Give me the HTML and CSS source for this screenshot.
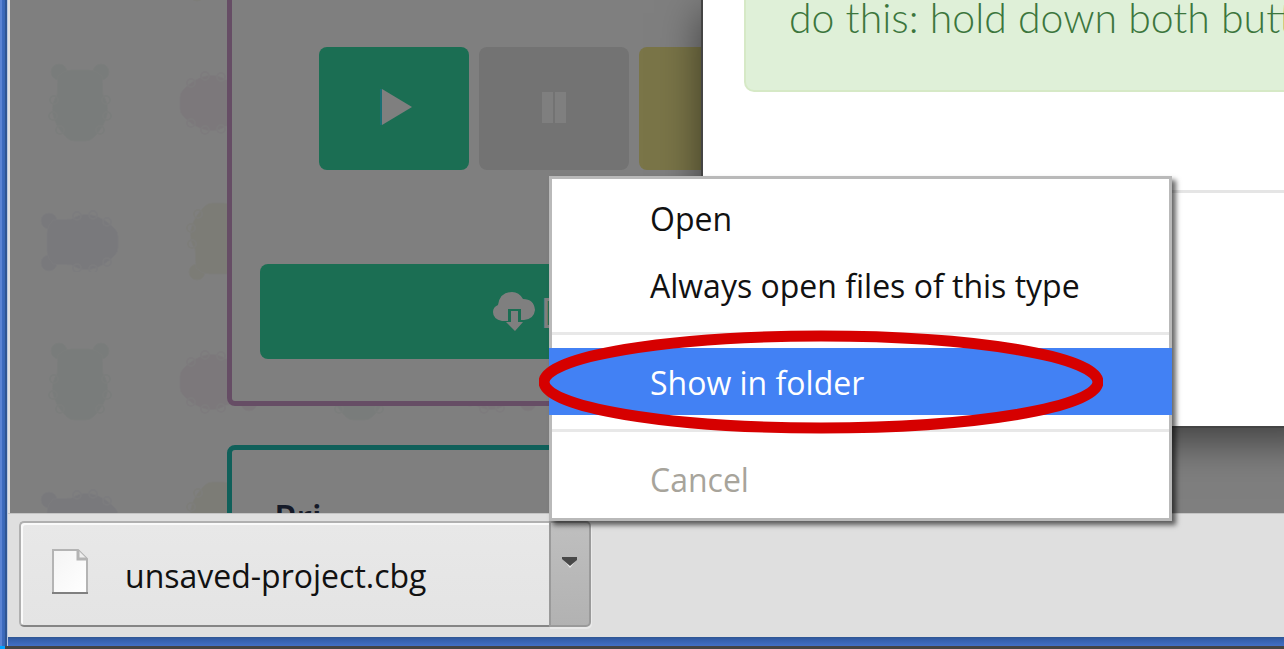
FILE: index.html
```html
<!DOCTYPE html>
<html lang="en">
<head>
  <meta charset="UTF-8" />
  <meta name="viewport" content="width=device-width, initial-scale=1.0" />
  <title>Downloads</title>
  <link rel="stylesheet" href="styles.css">
</head>
<body>

  <div class="window">
    <div class="viewport">

      <!-- faded bugs behind the cards -->
      <svg class="wallpaper" aria-hidden="true">
        <defs>
          <g id="bug">
            <circle cx="-21" cy="-31" r="8" />
            <circle cx="21" cy="-31" r="8" />
            <path d="M-22-27Q-16-33-9-33H9Q16-33 22-27L23-8Q29 0 27 12Q24 25 13 35Q10 38 6 38H-6Q-10 38-13 35Q-24 25-27 12Q-29 0-23-8Z" />
            <g fill="none" stroke-width="2">
              <circle cx="-26" cy="-3" r="4" />
              <circle cx="26" cy="-3" r="4" />
              <circle cx="-27" cy="13" r="4" />
              <circle cx="27" cy="13" r="4" />
              <circle cx="-20" cy="27" r="4" />
              <circle cx="20" cy="27" r="4" />
            </g>
          </g>
          <pattern id="bugs" width="279" height="279" patternUnits="userSpaceOnUse" y="-7">
            <use href="#bug" class="bug-green" transform="translate(70 110)" />
            <use href="#bug" class="bug-pink" transform="translate(208 110) rotate(90)" />
            <use href="#bug" class="bug-indigo" transform="translate(70 249) rotate(-90)" />
            <use href="#bug" class="bug-yellow" transform="translate(208 248) rotate(180)" />
            <use href="#bug" class="bug-yellow" transform="translate(208 -31) rotate(180)" />
          </pattern>
        </defs>
        <rect width="100%" height="100%" fill="url(#bugs)" />
      </svg>

      <div class="page">
        <div class="card card-controls">
          <div class="controls">
            <button class="control play" aria-label="Play">
              <svg width="32" height="36" viewBox="0 0 32 36"><path d="M2 0L32 18L2 36Z" fill="#fff" /><path d="M1 0V36" stroke="#36e0e6" stroke-width="2" /></svg>
            </button>
            <button class="control pause" aria-label="Pause">
              <svg width="26" height="31" viewBox="0 0 26 31"><path d="M1 0H12V31H1ZM14 0H25V31H14Z" fill="#fff" /></svg>
            </button>
            <button class="control stop" aria-label="Stop"></button>
          </div>
          <button class="download">
            <svg width="42" height="40" viewBox="0 0 42 40"><path d="M9 29Q0 27 0 20Q0 15 5 13Q7 0 19 0Q26 0 30 7Q41 7 42 18Q41 27 31 28L28 28V17H15V29Z" fill="#fff" /><path d="M18 19H25V30H30L22 39L13 30H18Z" fill="#fff" /></svg>
            <span>D</span>
          </button>
        </div>
        <div class="card card-print">
          <h2>Pri</h2>
        </div>
      </div>

      <div class="backdrop"></div>

      <div class="modal">
        <div class="modal-body">
          <div class="alert">do this: hold down both butt</div>
        </div>
        <div class="modal-footer"></div>
      </div>
    </div>

    <div class="download-bar">
      <div class="download-item">
        <button class="file">
          <svg width="36" height="45" viewBox="0 0 36 45">
            <defs>
              <linearGradient id="paper" x2="1" y2="1"><stop stop-color="#f4f4f4" /><stop offset="1" stop-color="#fff" /></linearGradient>
            </defs>
            <path d="M1 1H26L35 10V44H1Z" fill="url(#paper)" stroke="#b4b4b4" stroke-width="2" />
            <path d="M26 1V10H35" fill="#eee" stroke="#b4b4b4" stroke-width="3" />
            <path d="M0 44H36" stroke="#808080" stroke-width="2" />
          </svg>
          <span class="file-name">unsaved-project.cbg</span>
        </button>
        <button class="arrow" aria-label="Download options">
          <svg width="16" height="12" viewBox="0 0 16 12"><path d="M1 2H15L8 11Z" fill="#eee" /><path d="M0 0H15V3L8 9L0 2Z" fill="#484848" /></svg>
        </button>

        <div class="menu" role="menu">
          <button class="menu-item" role="menuitem">Open</button>
          <button class="menu-item" role="menuitem">Always open files of this type</button>
          <hr />
          <button class="menu-item selected" role="menuitem">Show in folder
            <svg class="marker" viewBox="0 0 564 104" aria-hidden="true"><ellipse cx="282" cy="52" rx="277" ry="46" fill="none" stroke="#d60000" stroke-width="11" /></svg>
          </button>
          <hr />
          <button class="menu-item" role="menuitem" disabled>Cancel</button>
        </div>
      </div>
    </div>
  </div>

  <div class="taskbar"></div>

</body>
</html>
```

FILE: styles.css
```css
* {
  box-sizing: border-box;
}

body {
  margin: 0;
  height: 100vh;
  display: flex;
  flex-direction: column;
  overflow: hidden;
  background: #3c69b8;
  font-family: "Open Sans", "Noto Sans", sans-serif;
}

button {
  margin: 0;
  padding: 0;
  border: none;
  font: inherit;
  color: inherit;
}

.window {
  flex: 1;
  min-height: 0;
  display: flex;
  flex-direction: column;
  padding: 0 0 9px 8px;
  background: linear-gradient(to right, #5a83d3 2px, #3e6cc0 2px, #3966b4 5px, #2f5592 5px, #2f5592 7px, #b9c8e0 7px, #b9c8e0 8px, transparent 8px),
    linear-gradient(to top, #426fc4, #3560ac 6px, #2f5592 9px);
}

.taskbar {
  height: 3px;
  background: linear-gradient(to right, #00a2ff 5px, #444 5px);
}

.viewport {
  position: relative;
  flex: 1;
  min-height: 0;
  overflow: hidden;
  background: #fff;
  border-left: 2px solid #dfdfdf;
}

.wallpaper {
  position: absolute;
  top: 0;
  left: 0;
  width: 80%;
  height: 100%;
}

.bug-green {
  fill: #f2f9f6;
  stroke: #f7fbf9;
}

.bug-pink {
  fill: #f8f0f6;
  stroke: #fbf7fa;
}

.bug-indigo {
  fill: #f2f2f9;
  stroke: #f8f8fc;
}

.bug-yellow {
  fill: #f8f8ec;
  stroke: #fbfbf5;
}

.page {
  position: relative;
  margin-left: 217px;
  margin-right: 200px;
}

.card {
  background: #fff;
  border: 5px solid #cc9acb;
  border-radius: 8px;
}

.card-controls {
  border-top: none;
  border-radius: 0 0 8px 8px;
  padding: 47px 28px 42px;
}

.controls {
  display: flex;
  gap: 10px;
  padding-left: 59px;
  margin-bottom: 94px;
}

.control {
  width: 150px;
  height: 123px;
  display: flex;
  align-items: center;
  justify-content: center;
  padding-bottom: 3px;
  border-radius: 8px;
}

.play {
  padding-left: 4px;
  background: #36dca6;
}

.pause {
  background: #e6e6e6;
}

.stop {
  background: #f4ea90;
}

.download {
  width: 100%;
  height: 95px;
  display: flex;
  align-items: center;
  gap: 5px;
  padding-left: 233px;
  border-radius: 8px;
  background: #36dca6;
  color: #fff;
  font-size: 42px;
}

.card-print {
  margin-top: 39px;
  padding: 40px 42px;
  border-color: #20c0b4;
}

.card-print h2 {
  margin: 0;
  font-size: 36px;
  line-height: 56px;
  font-weight: 600;
  color: #2b3550;
}

.backdrop {
  position: absolute;
  inset: 0;
  background: rgba(0, 0, 0, 0.5);
}

.modal {
  position: absolute;
  top: 0;
  left: 691px;
  right: -40px;
  background: #fff;
  border: 2px solid #444;
  border-top: none;
  box-shadow: 0 13px 39px rgba(0, 0, 0, 0.5);
}

.modal-body {
  padding: 0 0 98px 41px;
}

.alert {
  padding: 0 0 54px 43px;
  background: #dff0d8;
  border: 2px solid #d6e9c6;
  border-top: none;
  border-radius: 0 0 10px 10px;
  color: #3c763d;
  font-family: Lato, sans-serif;
  font-size: 41px;
  font-weight: 300;
  line-height: 36px;
  white-space: nowrap;
}

.modal-footer {
  height: 236px;
  border-top: 3px solid #e5e5e5;
}

.download-bar {
  flex: none;
  padding: 7px 11px 10px;
  background: #dfdfdf;
  border-top: 1px solid #c4c4c4;
}

.download-item {
  position: relative;
  width: 572px;
  height: 106px;
  display: flex;
}

.file {
  flex: 1;
  display: flex;
  align-items: center;
  gap: 37px;
  padding: 0 0 6px 31px;
  border: 2px solid #b0b0b0;
  border-bottom-color: #858585;
  border-right: none;
  border-radius: 5px 0 0 5px;
  background: linear-gradient(#e8e8e8, #e4e4e4);
  box-shadow: inset 2px 2px 0 #fafafa;
  color: #111;
  font-size: 32px;
}

.file-name {
  padding-top: 8px;
}

.arrow {
  width: 42px;
  display: flex;
  justify-content: center;
  padding-top: 34px;
  border: 2px solid #9a9a9a;
  border-radius: 0 5px 5px 0;
  background: linear-gradient(#bfbfbf, #b2b2b2);
  box-shadow: 1px 2px 0 #eaeaea;
}

.menu {
  position: absolute;
  left: 530px;
  bottom: 106px;
  width: 623px;
  padding: 5px 0 6px;
  background: #fff;
  border: 3px solid #b9b9b9;
  box-shadow: 4px 4px 5px rgba(0, 0, 0, 0.6);
}

.menu-item {
  display: block;
  width: 100%;
  height: 67px;
  padding: 2px 0 0 98px;
  background: none;
  color: #111;
  font-size: 32px;
  text-align: left;
}

.menu-item:disabled {
  color: #a7a49b;
}

.menu-item.selected {
  position: relative;
  width: auto;
  min-width: calc(100% + 6px);
  margin: 0 -3px;
  padding-left: 101px;
  background: #4281f4;
  color: #fff;
}

.marker {
  position: absolute;
  left: -10px;
  top: -18px;
  width: 564px;
  height: 104px;
}

.menu hr {
  margin: 14px 0 13px;
  border: none;
  border-top: 3px solid #e8e8e8;
}
```
